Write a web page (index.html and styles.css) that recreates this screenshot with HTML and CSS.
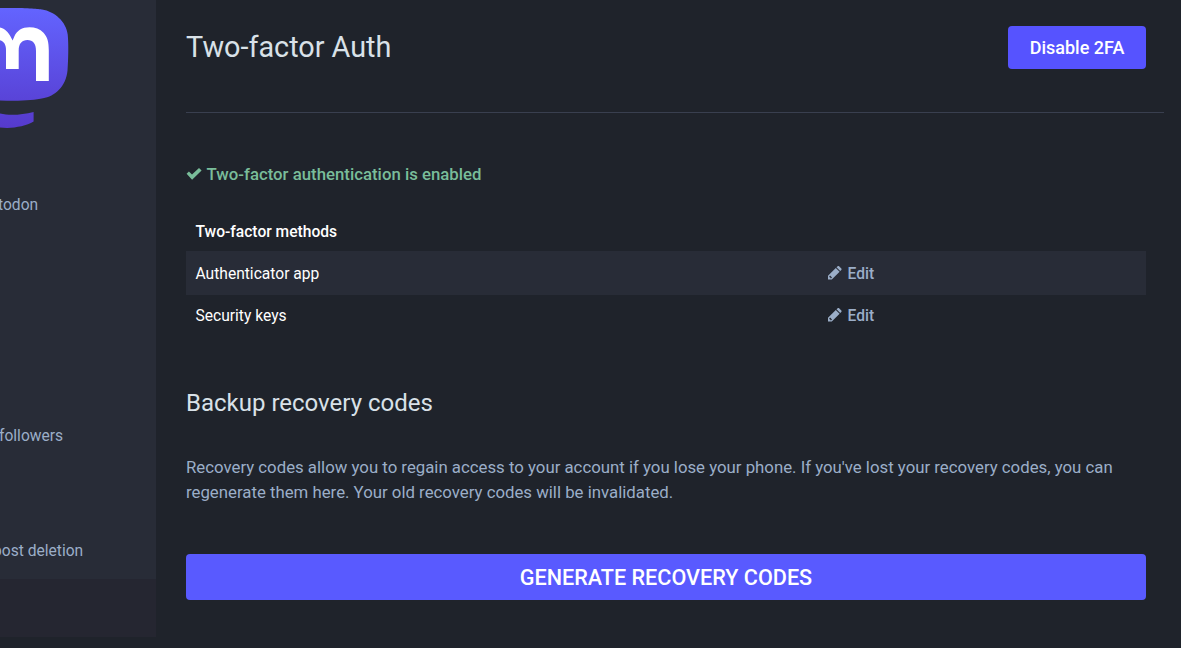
FILE: index.html
```html
<!DOCTYPE html>
<html lang="en">
<head>
<meta charset="utf-8">
<title>Two-factor Auth</title>
<link rel="stylesheet" href="styles.css">
</head>
<body>
<div class="layout">
  <aside class="sidebar">
    <div class="sidebar-main">
      <svg class="logo" width="72" height="132" viewBox="0 0 72 132" aria-label="Mastodon">
        <defs><linearGradient id="brand" gradientUnits="userSpaceOnUse" x1="0" y1="8" x2="0" y2="128"><stop offset="0" stop-color="#6364ff"/><stop offset="1" stop-color="#563acc"/></linearGradient></defs>
        <path fill="url(#brand)" d="M0 8H12C32 8 40 9.200 42 9.500C54.500 11.500 66.200 21.500 67.700 34.500C68.700 44 68.300 60 67.500 70.500C66 87 54.500 96.300 43 98.300C34 100.200 18 101.600 0 100.400Z"/>
        <path fill="url(#brand)" d="M0 113.500C10 116 22 114.800 33.600 112V121.600C25 126.500 12 129 0 127.500Z"/>
        <path fill="#fff" d="M48.800 81V50.500C48.800 42 47.500 37 43.500 32.700C40 29 35 27.300 29.500 27.300C22 27.300 17 30.500 14.300 36.500L12.600 40.500L10.800 37C8.500 32.500 5 28.800 0 27.600V40.300C4 41.500 6 44.500 6 50.500V69H18.700V50.500C18.700 43.500 22 40 27.400 40C33 40 36 43.500 36 51V81Z"/>
      </svg>
      <nav class="nav">
        <a class="nav-link nav-link-site">todon</a>
        <a class="nav-link nav-link-followers">followers</a>
        <a class="nav-link nav-link-deletion">post deletion</a>
      </nav>
    </div>
    <div class="sidebar-footer"></div>
  </aside>
  <main class="content">
    <header class="heading">
      <h2>Two-factor Auth</h2>
      <button class="button button-small">Disable 2FA</button>
    </header>
    <p class="status"><svg class="check" width="16" height="12" viewBox="0 0 16 12"><path fill="currentColor" d="M.6 5.800L2.900 3.500L6 6.500L13 0L15.600 2.400L6.100 11.800Z"/></svg>Two-factor authentication is enabled</p>
    <table class="methods">
      <thead><tr><th colspan="2">Two-factor methods</th></tr></thead>
      <tbody>
        <tr class="striped"><td>Authenticator app</td><td class="action"><a class="edit"><svg class="pencil" width="14" height="14" viewBox="0 0 14 14"><path fill="currentColor" fill-rule="evenodd" d="M0 13.500V9.700L7.800 2L11.600 5.800L3.800 13.500ZM1.300 10.400V11.300H2.300V12.300H3.200L4 11.500L2.100 9.600ZM8.500 1.300L9.700.2C10.200-.1 10.700-.1 11.100.3L13.300 2.500C13.700 2.900 13.700 3.500 13.300 3.900L12.200 5Z"/></svg>Edit</a></td></tr>
        <tr><td>Security keys</td><td class="action"><a class="edit"><svg class="pencil" width="14" height="14" viewBox="0 0 14 14"><path fill="currentColor" fill-rule="evenodd" d="M0 13.500V9.700L7.800 2L11.600 5.800L3.800 13.500ZM1.300 10.400V11.300H2.300V12.300H3.200L4 11.500L2.100 9.600ZM8.500 1.300L9.700.2C10.200-.1 10.700-.1 11.100.3L13.300 2.500C13.700 2.900 13.700 3.500 13.300 3.900L12.200 5Z"/></svg>Edit</a></td></tr>
      </tbody>
    </table>
    <h3>Backup recovery codes</h3>
    <p class="hint">Recovery codes allow you to regain access to your account if you lose your phone. If you've lost your recovery codes, you can regenerate them here. Your old recovery codes will be invalidated.</p>
    <button class="button button-block">Generate recovery codes</button>
  </main>
</div>
</body>
</html>
```
FILE: styles.css
```css
* { box-sizing: border-box; }
body { margin: 0; background: #1f232b; color: #fff; font-family: Roboto, sans-serif; font-size: 15.6px; overflow: hidden; }
h2, h3, p { margin: 0; font-weight: 400; }
.layout { display: flex; height: 648px; }
.sidebar { width: 156px; flex: none; display: flex; flex-direction: column; overflow: hidden; }
.sidebar-main { height: 579px; background: #282c37; }
.sidebar-footer { height: 58px; background: #252631; }
.logo { display: block; }
.nav { display: flex; flex-direction: column; padding-top: 63px; }
.nav-link { height: 20px; line-height: 20px; color: #9baec8; white-space: nowrap; }
.nav-link-site { margin-left: -2px; }
.nav-link-followers { margin-top: 211px; margin-left: -1px; }
.nav-link-deletion { margin-top: 95px; margin-left: -7px; }
.content { width: 1025px; padding-left: 30px; }
.heading { display: flex; justify-content: space-between; align-items: flex-start; width: 978px; height: 113px; padding: 26px 18px 0 0; border-bottom: 1px solid #393f4f; }
h2 { font-size: 28.8px; line-height: 42px; color: #d9e1e8; }
.button { display: block; border: 0; border-radius: 4px; color: #fff; font-family: inherit; font-weight: 500; padding: 0; text-align: center; }
.button-small { width: 138px; height: 43px; background: #5653ff; font-size: 18px; }
.button-block { width: 960px; height: 46px; background: #595aff; font-size: 21.6px; text-transform: uppercase; margin-top: 49px; }
.status { display: flex; align-items: center; gap: 4.5px; margin-top: 49px; height: 24px; color: #79bd9a; font-size: 16.8px; font-weight: 500; }
.methods { width: 960px; margin-top: 26px; border-collapse: collapse; table-layout: fixed; }
.methods th { height: 39px; padding: 0 9.5px; text-align: left; font-weight: 500; }
.methods td { height: 40px; padding: 2px 9.5px 0; }
.methods .striped td { height: 44px; background: #282c37; }
.methods .action { padding-left: 162px; }
.edit { display: flex; align-items: center; gap: 5.5px; color: #9baec8; font-weight: 500; }
.pencil { margin-bottom: 2px; }
h3 { margin-top: 50px; font-size: 24px; line-height: 36px; color: #d9e1e8; }
.hint { margin-top: 34px; width: 960px; font-size: 16.8px; line-height: 25px; color: #9baec8; }
```
